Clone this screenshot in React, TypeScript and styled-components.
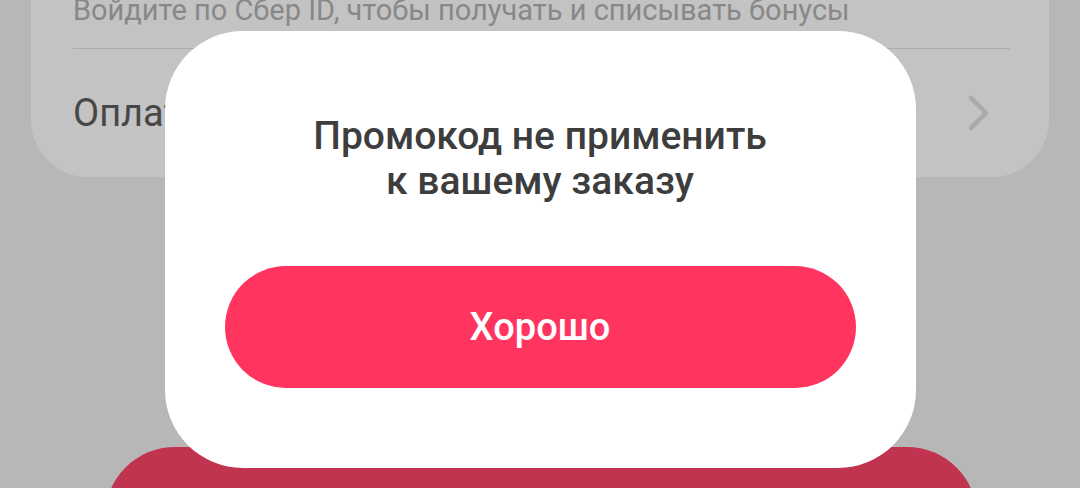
import React from 'react'
import styled, { createGlobalStyle } from 'styled-components'

const GlobalStyle = createGlobalStyle`
  html, body {
    margin: 0;
    padding: 0;
    height: 100%;
    overflow: hidden;
    background: #b7b7b7;
    font-family: Roboto, 'Noto Sans', sans-serif;
  }
`

const Screen = styled.div`
  position: relative;
  width: 1080px;
  height: 488px;
  overflow: hidden;
  background: #b7b7b7;
`

const Page = styled.div`
  display: flex;
  flex-direction: column;
`

const BonusCard = styled.section`
  margin: 0 31px;
  padding: 0 39px 0 42px;
  background: #c3c3c3;
  border-radius: 0 0 57px 57px;
  display: flex;
  flex-direction: column;
`

const Hint = styled.div`
  font-size: 29px;
  line-height: 20px;
  color: #888888;
  white-space: nowrap;
`

const Divider = styled.hr`
  margin: 28px 0 0;
  border: 0;
  height: 1px;
  background: #adadad;
`

const Row = styled.div`
  height: 128px;
  display: flex;
  align-items: center;
  justify-content: space-between;
  padding-right: 16px;
`

const RowLabel = styled.span`
  font-size: 38px;
  color: #474747;
`

const PayButton = styled.div`
  margin: 270px 103px 0 105px;
  height: 140px;
  border-radius: 82px;
  background: #c0344f;
`

const Overlay = styled.div`
  position: absolute;
  inset: 0;
  display: flex;
  justify-content: center;
  align-items: flex-start;
  padding-top: 31px;
`

const Dialog = styled.div`
  width: 751px;
  box-sizing: border-box;
  padding: 83px 60px 80px;
  background: #ffffff;
  border-radius: 78px;
  display: flex;
  flex-direction: column;
  align-items: center;
`

const Title = styled.h2`
  margin: 0;
  font-size: 39px;
  line-height: 45px;
  font-weight: 500;
  color: #3d3d3d;
  text-align: center;
`

const OkButton = styled.button`
  margin-top: 62px;
  width: 100%;
  height: 122px;
  border: 0;
  border-radius: 61px;
  background: #ff3560;
  color: #ffffff;
  font-family: Roboto, 'Noto Sans', sans-serif;
  font-size: 38px;
  font-weight: 500;
  cursor: pointer;
`

const Chevron = () => (
  <svg width="30" height="42" viewBox="0 0 30 42">
    <path
      d="M7 6 L22 21 L7 36"
      fill="none"
      stroke="#aaaaaa"
      strokeWidth="4.5"
      strokeLinecap="round"
      strokeLinejoin="round"
    />
  </svg>
)

export default function App() {
  return (
    <Screen>
      <GlobalStyle />
      <Page>
        <BonusCard>
          <Hint>Войдите по Сбер ID, чтобы получать и списывать бонусы</Hint>
          <Divider />
          <Row>
            <RowLabel>Оплата</RowLabel>
            <Chevron />
          </Row>
        </BonusCard>
        <PayButton />
      </Page>
      <Overlay>
        <Dialog>
          <Title>
            Промокод не применить
            <br />к вашему заказу
          </Title>
          <OkButton>Хорошо</OkButton>
        </Dialog>
      </Overlay>
    </Screen>
  )
}
